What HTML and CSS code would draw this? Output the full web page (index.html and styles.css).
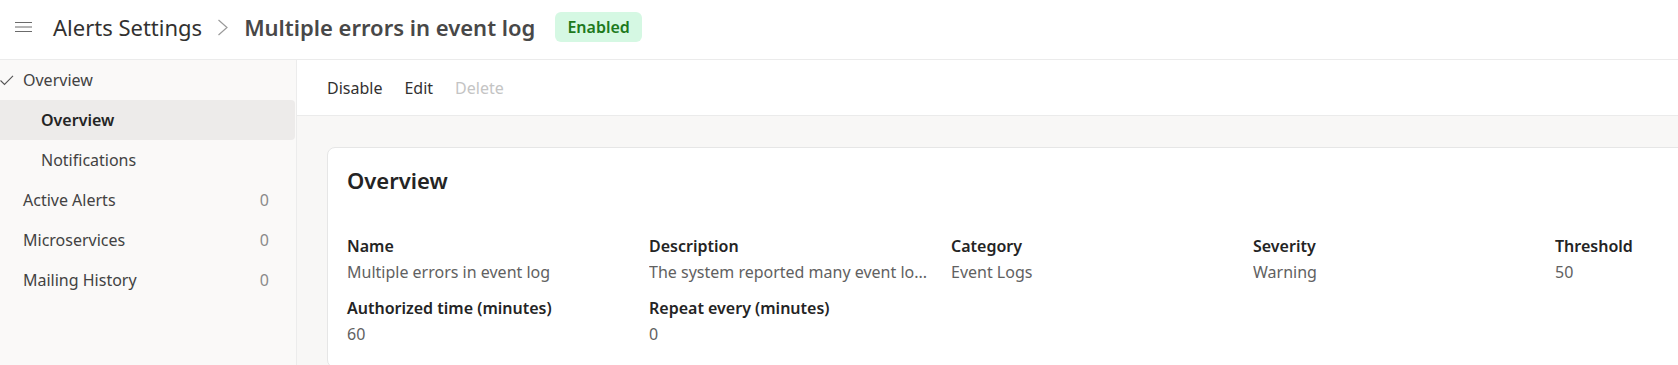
FILE: index.html
```html
<!DOCTYPE html>
<html lang="en">
<head>
<meta charset="utf-8">
<title>Alerts Settings</title>
<link rel="stylesheet" href="styles.css">
</head>
<body>
<header class="header">
  <svg class="hamburger" width="17" height="11" viewBox="0 0 17 11"><path d="M0 0.5H17M0 5H17M0 9.5H17" stroke="#6b6b6b" stroke-width="1" fill="none"/></svg>
  <span class="crumb">Alerts Settings</span>
  <svg class="chevron" width="12" height="17" viewBox="0 0 12 17"><polyline points="1.5,1 10,8.5 1.5,16" stroke="#9a9a9a" stroke-width="1.2" fill="none"/></svg>
  <span class="title">Multiple errors in event log</span>
  <span class="badge">Enabled</span>
</header>
<div class="main">
  <nav class="sidebar">
    <div class="nav-item top">
      <span class="nav-label"><svg class="check" width="14" height="11" viewBox="0 0 14 11"><polyline points="0.5,5.5 4.5,9.5 13,0.8" stroke="#555" stroke-width="1.1" fill="none"/></svg>Overview</span>
    </div>
    <div class="nav-item sub selected"><span class="nav-label">Overview</span></div>
    <div class="nav-item sub"><span class="nav-label">Notifications</span></div>
    <div class="nav-item"><span class="nav-label">Active Alerts</span><span class="count">0</span></div>
    <div class="nav-item"><span class="nav-label">Microservices</span><span class="count">0</span></div>
    <div class="nav-item"><span class="nav-label">Mailing History</span><span class="count">0</span></div>
  </nav>
  <section class="content">
    <div class="toolbar">
      <span class="action">Disable</span>
      <span class="action">Edit</span>
      <span class="action disabled">Delete</span>
    </div>
    <div class="body-area">
      <div class="card">
        <h2 class="card-title">Overview</h2>
        <div class="fields">
          <div class="field"><div class="label">Name</div><div class="value">Multiple errors in event log</div></div>
          <div class="field"><div class="label">Description</div><div class="value">The system reported many event lo...</div></div>
          <div class="field"><div class="label">Category</div><div class="value">Event Logs</div></div>
          <div class="field"><div class="label">Severity</div><div class="value">Warning</div></div>
          <div class="field"><div class="label">Threshold</div><div class="value">50</div></div>
          <div class="field"><div class="label">Authorized time (minutes)</div><div class="value">60</div></div>
          <div class="field"><div class="label">Repeat every (minutes)</div><div class="value">0</div></div>
        </div>
      </div>
    </div>
  </section>
</div>
</body>
</html>
```
FILE: styles.css
```css
* { box-sizing: border-box; }
html, body {
  margin: 0;
  height: 100%;
  overflow: hidden;
  background: #ffffff;
  font-family: "Noto Sans", "Open Sans", sans-serif;
  font-size: 16px;
  color: #242424;
}
.header {
  height: 60px;
  border-bottom: 1px solid #ebebeb;
  display: flex;
  align-items: center;
  padding: 0 0 6px 15px;
  background: #fff;
}
.hamburger { flex: none; margin-right: 21px; margin-top: 2px; }
.crumb { font-size: 22px; color: #323130; line-height: 30px; }
.chevron { flex: none; margin: 1px 15px 0 15px; }
.title { font-size: 22px; font-weight: 600; color: #484848; line-height: 30px; }
.badge {
  margin-left: 20px;
  height: 30px;
  line-height: 30px;
  padding: 0 12px;
  border-radius: 6px;
  background: #d5f8e3;
  color: #1d7a1d;
  font-size: 16px;
  font-weight: 600;
  margin-top: 1px;
}
.main {
  display: flex;
  height: calc(100% - 60px);
}
.sidebar {
  flex: none;
  width: 297px;
  background: #faf9f8;
  border-right: 1px solid #ececec;
  padding-right: 1px;
}
.nav-item {
  height: 40px;
  display: flex;
  align-items: center;
  justify-content: space-between;
  padding: 0 26px 0 23px;
  color: #424242;
  white-space: nowrap;
}
.nav-item.top { padding-left: 0; }
.nav-label { display: flex; align-items: center; }
.check { margin-right: 9px; }
.nav-item.sub { padding-left: 41px; }
.nav-item.selected {
  background: #edebea;
  font-weight: 600;
  color: #242424;
  border-radius: 0 4px 4px 0;
}
.count { color: #8a8a8a; }
.content {
  flex: 1;
  min-width: 0;
  background: #f8f7f6;
  display: flex;
  flex-direction: column;
}
.toolbar {
  flex: none;
  height: 56px;
  background: #fff;
  border-bottom: 1px solid #ebebeb;
  display: flex;
  align-items: center;
  gap: 22px;
  padding: 0 0 0 30px;
}
.action { color: #323130; }
.action.disabled { color: #c4c4c4; }
.body-area {
  flex: 1;
  padding: 31px 0 0 30px;
}
.card {
  width: 1600px;
  background: #fff;
  border: 1px solid #e6e6e6;
  border-radius: 8px;
  padding: 17px 20px 20px 19px;
}
.card-title {
  margin: 0 0 38px 0;
  font-size: 22px;
  font-weight: 600;
  line-height: 30px;
  color: #242424;
}
.fields {
  display: grid;
  grid-template-columns: repeat(5, 302px);
  row-gap: 10px;
}
.field { min-width: 0; padding-right: 14px; }
.label {
  font-weight: 600;
  line-height: 26px;
  color: #242424;
  white-space: nowrap;
}
.value {
  line-height: 26px;
  color: #616161;
  white-space: nowrap;
  overflow: hidden;
  text-overflow: ellipsis;
}
```
